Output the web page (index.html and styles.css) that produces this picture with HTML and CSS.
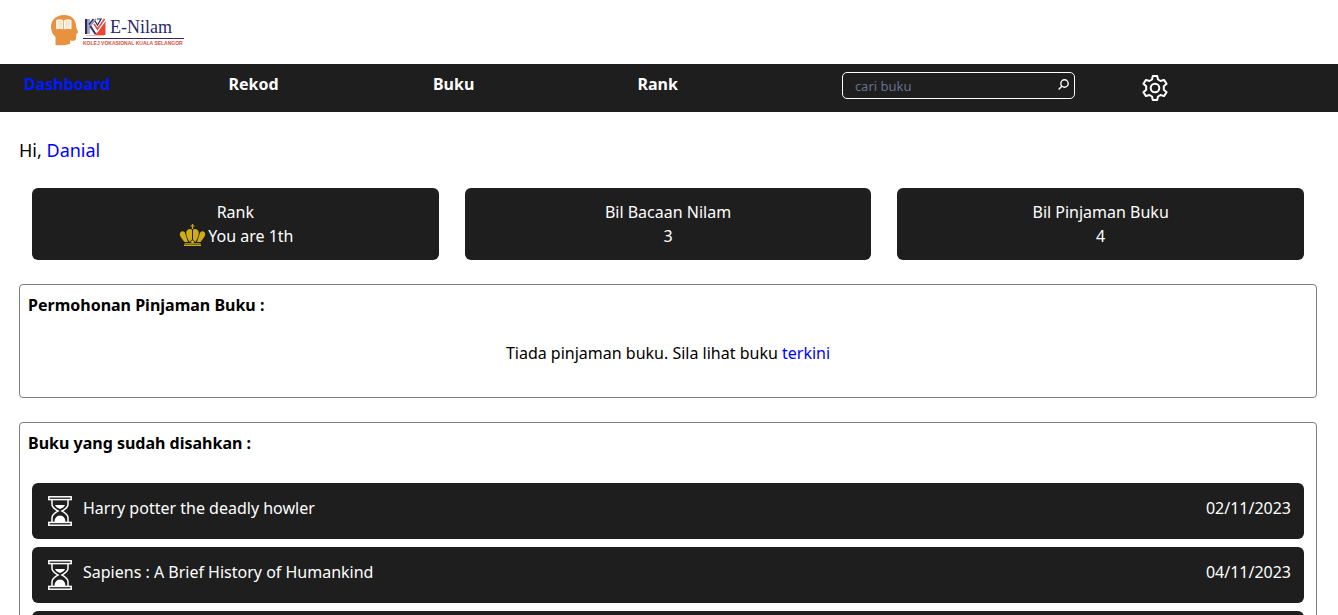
FILE: index.html
```html
<!DOCTYPE html>
<html lang="ms">
<head>
<meta charset="utf-8">
<meta name="viewport" content="width=device-width, initial-scale=1">
<title>E-Nilam</title>
<link rel="stylesheet" href="styles.css">
</head>
<body>
<svg class="defs" aria-hidden="true">
  <symbol id="hourglass" viewBox="0 0 24 30">
    <g fill="none" stroke="#fff" stroke-width="1.5">
      <rect x=".8" y=".8" width="22.4" height="2.8"/>
      <rect x=".8" y="26.4" width="22.4" height="2.8"/>
      <path d="M4 3.600v4.600c0 3.500 3 5 6 6.800-3 1.800-6 3.300-6 6.800v4.600M20 3.600v4.600c0 3.500-3 5-6 6.800 3 1.800 6 3.300 6 6.800v4.600"/>
    </g>
    <path fill="#fff" d="M7 9h10c-.5 2-3 3-5 4-2-1-4.500-2-5-4zM6.500 26c0-3.500 2-6.500 5.500-6.500s5.500 3 5.500 6.500z"/>
  </symbol>
</svg>
<header class="brand">
  <svg class="brand-head" viewBox="0 0 28 31" aria-hidden="true">
    <path fill="#e8923f" d="M4.500 30V22C1.500 19 0 16 0 12 0 5 5 0 13 0c7 0 11.500 4 12 10 0 3 1.500 5 2 7 .2 1-.5 1.300-1.500 1.500l-.5 5c-.2 2-1.500 2.500-4 2.200l-2-.2V29c-5 1.500-10 1.500-14.500 1z"/>
    <path fill="#fff6ea" d="M5 5q4-1.500 7.300.2v9.300q-3.300-1.500-7.300-.3zM13 5.200Q16.500 3.500 20.500 5v9.200q-4-1.200-7.500.3z"/>
    <path stroke="#eec092" stroke-width=".6" fill="none" d="M6.500 7h4.500M6.500 9h4.500M6.500 11h4.500M14.300 7h4.500M14.300 9h4.500M14.300 11h4.500"/>
  </svg>
  <div class="brand-text">
    <div class="brand-title">
      <svg class="brand-mark" viewBox="0 0 21 18" aria-hidden="true">
        <path fill="#ed4534" d="M20.500 3v14H10z"/>
        <path fill="#29296a" d="M0 1h2.500v15H0z"/>
        <path fill="none" stroke="#8c8caf" stroke-width="1.5" d="M4 1v15M11 1L4.500 8.500l6 7.500"/>
        <path fill="none" stroke="#29296a" stroke-width="1.5" d="M8.500 1L4 6.500M5.500 8l5 8"/>
        <path fill="none" stroke="#fff" stroke-width="3" d="M8.500 7l4 5L20 1"/>
        <path fill="none" stroke="#e34d43" stroke-width="1.6" d="M9 6l3.500 5L19.500 1"/>
        <path fill="none" stroke="#29296a" stroke-width="1.2" d="M12 1h4l-3.500 6L10 3"/>
        <path stroke="#ec9b92" stroke-width=".7" d="M1 17.500h18"/>
      </svg>
      <span>E-Nilam</span>
    </div>
    <div class="brand-sub">KOLEJ VOKASIONAL KUALA SELANGOR</div>
  </div>
</header>
<nav class="nav">
  <a class="active" href="#">Dashboard</a>
  <a href="#">Rekod</a>
  <a href="#">Buku</a>
  <a href="#">Rank</a>
  <form class="search">
    <input type="text" placeholder="cari buku" aria-label="cari buku">
    <button type="button" aria-label="Cari">
      <svg viewBox="0 0 11 11" fill="none" stroke="#fff" stroke-width="1.4"><circle cx="6.500" cy="4.500" r="3.700"/><path d="M3.800 7.200L.6 10.400"/></svg>
    </button>
  </form>
  <button class="settings" type="button" aria-label="Tetapan">
    <svg viewBox="0 0 26 26" fill="none" stroke="#fff" stroke-width="2" stroke-linejoin="round">
      <path d="M10.800 1h4.400l.8 3.500 2.600 1.500 3.400-1.100 2.600 3.800L21.800 11.300v3.400l2.800 2.600-2.600 3.800-3.400-1.100-2.600 1.500-.8 3.500h-4.400l-.8-3.500L7.400 20 4 21.100l-2.600-3.800 2.800-2.600v-3.400L1.400 8.700 4 4.900 7.400 6 10 4.500z"/>
      <circle cx="13" cy="13" r="4.300"/>
    </svg>
  </button>
</nav>
<main class="main">
  <p class="greeting">Hi, <a href="#">Danial</a></p>
  <section class="stats">
    <div class="stat">
      <div>Rank</div>
      <div class="rank-line">
        <svg class="crown" viewBox="0 0 26 22" aria-hidden="true">
          <g fill="#ceae16">
            <path d="M12.400 0h1.200v1.400H15v1.200h-1.400V5h-1.200V2.600H11V1.400h1.400z"/>
            <path d="M12.500 5.500v10L10 18c-1.500-3-3.500-6-3.300-9.500C7 5.500 10 4 12.500 5.500zM13.500 5.500v10L16 18c1.500-3 3.500-6 3.300-9.500C19 5.500 16 4 13.500 5.500z"/>
            <path d="M.5 9C2 6.500 5 7 5.700 9.500L8.500 18H5C3 15-.5 12 .5 9zM25.500 9C24 6.500 21 7 20.300 9.500L17.500 18H21c2-3 5.500-6 4.500-9z"/>
            <path d="M13 16l2 2-2 1.500L11 18zM5 19h16v.8H5zM4.500 20.500h17V22h-17z"/>
          </g>
        </svg>
        <span>You are 1th</span>
      </div>
    </div>
    <div class="stat"><div>Bil Bacaan Nilam</div><div>3</div></div>
    <div class="stat"><div>Bil Pinjaman Buku</div><div>4</div></div>
  </section>
  <section class="panel">
    <h2>Permohonan Pinjaman Buku :</h2>
    <p class="empty">Tiada pinjaman buku. Sila lihat buku <a href="#">terkini</a></p>
  </section>
  <section class="panel">
    <h2>Buku yang sudah disahkan :</h2>
    <ul class="books">
      <li><svg class="hourglass" aria-hidden="true"><use href="#hourglass"/></svg><span class="book-title">Harry potter the deadly howler</span><time>02/11/2023</time></li>
      <li><svg class="hourglass" aria-hidden="true"><use href="#hourglass"/></svg><span class="book-title">Sapiens : A Brief History of Humankind</span><time>04/11/2023</time></li>
      <li></li>
    </ul>
  </section>
</main>
</body>
</html>
```

FILE: styles.css
```css
* { box-sizing: border-box; }
html { scrollbar-width: none; }
body {
  margin: 0;
  background: #fff;
  color: #000;
  font: 16px/24px "Noto Sans", sans-serif;
}
a { color: #00f; text-decoration: none; }
h2, p, ul { margin: 0; padding: 0; }
.defs { display: none; }

.brand {
  display: flex;
  align-items: flex-start;
  gap: 4px;
  height: 64px;
  padding: 15px 51px;
}
.brand-head { width: 28px; height: 31px; }
.brand-title {
  display: flex;
  align-items: center;
  gap: 4px;
  height: 24px;
  padding-left: 2px;
  border-bottom: 1px solid #29296a;
  color: #29296a;
  font: 18px/22px "Liberation Serif", serif;
}
.brand-mark { width: 21px; height: 18px; }
.brand-text { width: 101px; }
.brand-sub {
  color: #d9513c;
  font: 5px/8px "Liberation Sans", sans-serif;
  font-weight: bold;
  white-space: nowrap;
}

.nav {
  display: grid;
  grid-template-columns: repeat(4, 16%) 23% 1fr;
  align-items: start;
  height: 48px;
  padding: 8px 36px 0 24px;
  background: #1e1e1e;
}
.nav a { color: #fff; font-weight: bold; }
.nav .active { color: #0019ff; }
.search {
  display: flex;
  align-items: center;
  width: 233px;
  height: 27px;
  border: 1px solid #fff;
  border-radius: 5px;
}
.search input {
  flex: 1;
  min-width: 0;
  padding: 0 12px;
  border: 0;
  outline: 0;
  background: none;
  color: #fff;
  font: 13px/20px "Noto Sans", sans-serif;
}
.search input::placeholder { color: #64708a; }
.search button {
  padding: 0 5px 3px;
  border: 0;
  background: none;
  line-height: 0;
}
.search svg { width: 11px; height: 11px; }
.settings {
  padding: 3px 6px 0;
  border: 0;
  background: none;
  line-height: 0;
  justify-self: start;
}
.settings svg { width: 26px; height: 26px; }

.main { padding: 26px 21px 0 19px; }
.greeting { font-size: 18px; }
.stats {
  display: grid;
  grid-template-columns: repeat(3, 1fr);
  gap: 26px;
  padding: 26px 13px 24px;
}
.stat {
  padding: 12px;
  border-radius: 6px;
  background: #1e1e1e;
  color: #fff;
  text-align: center;
}
.rank-line {
  display: flex;
  align-items: flex-start;
  justify-content: center;
  gap: 2px;
  padding-left: 2px;
}
.crown { width: 27px; height: 22px; }

.panel {
  margin-bottom: 24px;
  padding: 8px;
  border: 1px solid #808080;
  border-radius: 4px;
}
.panel h2 { font-size: 16px; line-height: 24px; }
.empty { padding: 24px 0; text-align: center; }
.books {
  display: grid;
  gap: 8px;
  padding: 28px 4px 0;
  list-style: none;
}
.books li {
  display: flex;
  align-items: flex-start;
  min-height: 56px;
  padding: 13px 13px 13px 16px;
  border-radius: 6px;
  background: #1e1e1e;
  color: #fff;
}
.hourglass { width: 24px; height: 30px; }
.book-title { flex: 1; margin-left: 11px; }
```
